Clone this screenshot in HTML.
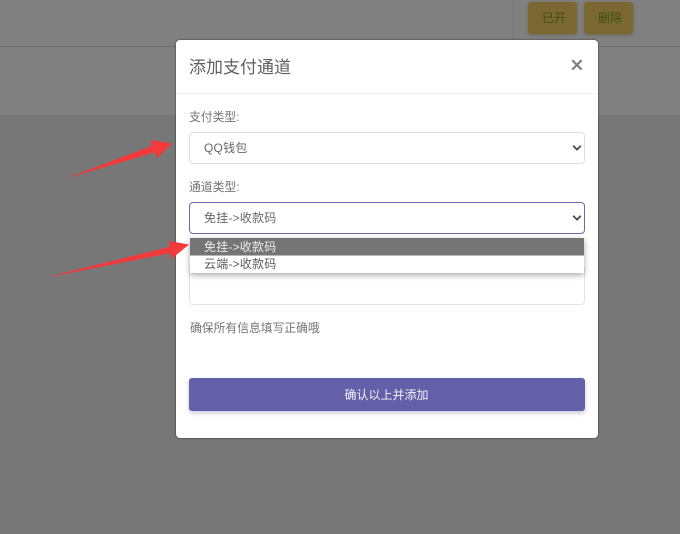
<!DOCTYPE html>
<html lang="zh">
<head>
<meta charset="utf-8">
<style>
*{box-sizing:border-box}
html,body{margin:0;padding:0}
body{width:680px;height:534px;overflow:hidden;position:relative;background:#777;font-family:"Liberation Sans","Noto Sans CJK SC",sans-serif;color:#5f5f66}
#w{position:absolute;left:0;top:0;width:680px;height:534px;overflow:hidden;background:#777;filter:blur(.3px)}
.abs{position:absolute}
.t{position:absolute;white-space:nowrap;font-size:12px;line-height:16px}
.o{letter-spacing:.2px}
.yb{position:absolute;top:2px;width:49px;height:32px;background:#7b6731;border-radius:3px;color:#3a5312;font-size:12px;line-height:33px;text-align:center;padding-left:3px;box-shadow:0 1px 3px rgba(90,75,30,.5)}
.sel{position:absolute;left:189px;width:396px;background:#fff;border:1px solid #dcdde8;border-radius:4px}
</style>
</head>
<body>
<div id="w">
<div class="abs" style="left:0;top:0;width:680px;height:115px;background:#808080"></div>
<div class="abs" style="left:0;top:46px;width:680px;height:1px;background:#6f6f6f"></div>
<div class="abs" style="left:513px;top:0;width:1px;height:46px;background:#767676"></div>
<div class="yb" style="left:528px">已开</div>
<div class="yb" style="left:584px">删除</div>

<div class="abs" style="left:176px;top:40px;width:422px;height:398px;background:#fff;border-radius:4px;box-shadow:0 0 1px 1px rgba(60,60,60,.45)"></div>
<div class="abs" style="left:176px;top:93px;width:422px;height:1px;background:#eff0f4"></div>
<div class="t" style="left:189px;top:56px;font-size:17px;line-height:24px;color:#5f5f64">添加支付通道</div>
<svg class="abs" style="left:570px;top:58px" width="14" height="14" viewBox="0 0 14 14"><path d="M2.2 2.2L11.6 11.6M11.6 2.200L2.2 11.6" stroke="#808084" stroke-width="2.200" fill="none"/></svg>

<div class="t" style="left:189px;top:109px;color:#737378;font-size:11.800px">支付类型:</div>
<div class="sel" style="top:132px;height:32px"></div>
<div class="t o" style="left:204px;top:140px;color:#66666c">QQ钱包</div>
<svg class="abs" style="left:572px;top:144px" width="10" height="8" viewBox="0 0 10 8"><path d="M1.2 1.8L5 5.6L8.8 1.8" stroke="#4a4a50" stroke-width="1.8" fill="none"/></svg>

<div class="t" style="left:189px;top:179px;color:#737378;font-size:11.800px">通道类型:</div>
<div class="sel" style="top:202px;height:32px;border-color:#6c68ad"></div>
<div class="t o" style="left:204px;top:210px;color:#66666c">免挂-&gt;收款码</div>
<svg class="abs" style="left:572px;top:214px" width="10" height="8" viewBox="0 0 10 8"><path d="M1.2 1.8L5 5.6L8.8 1.8" stroke="#4a4a50" stroke-width="1.8" fill="none"/></svg>

<div class="sel" style="top:265px;height:40px;border-color:#e2e2ec"></div>

<div class="abs" style="left:190px;top:238px;width:394px;height:35px;background:#fff;box-shadow:0 2px 6px rgba(0,0,0,.35)"></div>
<div class="abs" style="left:190px;top:238px;width:394px;height:17px;background:#757575"></div>
<div class="abs" style="left:190px;top:255px;width:394px;height:1px;background:#b5b5b5"></div>
<div class="t o" style="left:204px;top:239px;color:#ececec">免挂-&gt;收款码</div>
<div class="t o" style="left:204px;top:256px;color:#5a5a5a">云端-&gt;收款码</div>

<div class="t" style="left:190px;top:320px;color:#737378;font-size:11.800px">确保所有信息填写正确哦</div>

<div class="abs" style="left:189px;top:378px;width:396px;height:33px;background:#635fa9;border-radius:3px;box-shadow:0 2px 5px rgba(99,95,169,.35);color:#f2f2f8;font-size:12px;line-height:34px;text-align:center;padding-right:1px">确认以上并添加</div>

<svg class="abs" style="left:0;top:0" width="680" height="534" viewBox="0 0 680 534">
<path d="M72 176.500L152.300 146L151 140.300L171.500 143.700L156.700 157.700L155 152Z" fill="#f43a3a" stroke="#f43a3a" stroke-width=".6" stroke-linejoin="round"/>
<path d="M52 276.200L170 247L169 241.300L188.500 244.700L171 258.700L171 252.700Z" fill="#f43a3a" stroke="#f43a3a" stroke-width=".6" stroke-linejoin="round"/>
</svg>
</div>
</body>
</html>
